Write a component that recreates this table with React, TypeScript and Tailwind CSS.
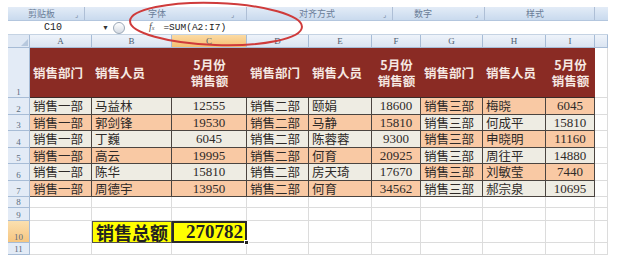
import React from "react";

const W = [
  "w-[22px]",
  "w-[62px]",
  "w-[80px]",
  "w-[75px]",
  "w-[62px]",
  "w-[63px]",
  "w-[49px]",
  "w-[62px]",
  "w-[63px]",
  "w-[49px]",
  "w-[13px]",
];

const LETTERS = ["A", "B", "C", "D", "E", "F", "G", "H", "I", ""];

const CJK = "font-['Noto_Sans_CJK_SC',sans-serif]";
const SERIF = "font-['Liberation_Serif',serif]";

const rows = [
  ["销售一部", "马益林", "12555", "销售二部", "颐娟", "18600", "销售三部", "梅晓", "6045"],
  ["销售一部", "郭剑锋", "19530", "销售二部", "马静", "15810", "销售三部", "何成平", "15810"],
  ["销售一部", "丁巍", "6045", "销售二部", "陈蓉蓉", "9300", "销售三部", "申晓明", "11160"],
  ["销售一部", "高云", "19995", "销售二部", "何育", "20925", "销售三部", "周往平", "14880"],
  ["销售一部", "陈华", "15810", "销售二部", "房天琦", "17670", "销售三部", "刘敏莹", "7440"],
  ["销售一部", "周德宇", "13950", "销售二部", "何育", "34562", "销售三部", "郝宗泉", "10695"],
];

const headers = ["销售部门", "销售人员", "5月份\n销售额", "销售部门", "销售人员", "5月份\n销售额", "销售部门", "销售人员", "5月份\n销售额"];

function RowHead({ n, hl }: { n: string; hl?: boolean }) {
  return (
    <div
      className={`${W[0]} shrink-0 h-full flex items-end justify-center border-r border-b border-[#a7bcd6] text-[9px] leading-[10px] text-[#5b6b80] ${SERIF} ${
        hl ? "bg-gradient-to-b from-[#fbe0b0] to-[#f6c680]" : "bg-[#e3ebf6]"
      }`}
    >
      {n}
    </div>
  );
}

function Empty({ i }: { i: number }) {
  return <div className={`${W[i]} shrink-0 h-full border-r border-b border-[#dcdcdc] bg-white`} />;
}

function EmptyRow({ n, h }: { n: string; h: string }) {
  return (
    <div className={`flex ${h}`}>
      <RowHead n={n} />
      {LETTERS.map((_, i) => (
        <Empty key={i} i={i + 1} />
      ))}
    </div>
  );
}

export default function App() {
  return (
    <div className="relative w-[618px] h-[265px] bg-white overflow-hidden pt-[7px] pl-[8px]">
      <div className="w-[600px] flex flex-col">
        {/* ribbon group labels */}
        <div className="h-[14px] flex bg-gradient-to-b from-[#e3ecf7] to-[#c9daee] border-b border-[#b3c6de] text-[9px] leading-[12px] text-[#6a7d98] font-['Noto_Sans_CJK_SC',sans-serif]">
          <div className="w-[77px] flex items-center border-r border-[#aebfd6]">
            <span className="ml-[20px]">剪贴板</span>
            <span className="ml-auto mr-[6px] text-[7px]">⌟</span>
          </div>
          <div className="w-[162px] flex items-center border-r border-[#aebfd6]">
            <span className="ml-[63px]">字体</span>
            <span className="ml-auto mr-[12px] text-[7px]">⌟</span>
          </div>
          <div className="w-[146px] flex items-center border-r border-[#aebfd6]">
            <span className="ml-[52px]">对齐方式</span>
            <span className="ml-auto mr-[6px] text-[7px]">⌟</span>
          </div>
          <div className="w-[92px] flex items-center border-r border-[#aebfd6]">
            <span className="ml-[21px]">数字</span>
            <span className="ml-auto mr-[6px] text-[7px]">⌟</span>
          </div>
          <div className="w-[110px] flex items-center border-r border-[#aebfd6]">
            <span className="ml-[41px]">样式</span>
          </div>
          <div className="flex-1" />
        </div>

        {/* formula bar */}
        <div className="h-[14px] flex items-center bg-white border-b border-[#c5d3e3] text-[10px] leading-[12px] text-[#222]">
          <div className="w-[92px] flex justify-center">
            <span className="font-['Liberation_Mono',monospace] ml-[-2px]">C10</span>
          </div>
          <span className="text-[7px] text-[#333] ml-[2px]">▼</span>
          <span className="ml-[4px] w-[12px] h-[12px] rounded-full border border-[#9aa7b6] bg-gradient-to-b from-[#ffffff] to-[#d5dbe3]" />
          <span className="ml-[24px] italic font-['Liberation_Serif',serif] text-[10px] text-[#555]">
            f<span className="text-[6px]">x</span>
          </span>
          <span className="ml-[9px] font-['Liberation_Mono',monospace] text-[9.5px] text-[#222]">=SUM(A2:I7)</span>
        </div>

        {/* column headers */}
        <div className="flex h-[13px]">
          <div className={`${W[0]} shrink-0 h-full border-r border-b border-[#a7bcd6] bg-[#dfe8f4] flex items-end justify-end`}>
            <svg width="7" height="7" className="mb-[1px] mr-[1px]">
              <path d="M7 0 L7 7 L0 7 Z" fill="#b7c8dd" />
            </svg>
          </div>
          {LETTERS.map((l, i) => (
            <div
              key={i}
              className={`${W[i + 1]} shrink-0 h-full flex items-center justify-center border-r border-b border-[#a7bcd6] text-[9px] leading-[11px] text-[#4d5b6e] ${SERIF} ${
                l === "C" ? "bg-gradient-to-b from-[#fbdba4] to-[#f5bf70]" : "bg-gradient-to-b from-[#eef3fa] to-[#dae4f1]"
              }`}
            >
              {l}
            </div>
          ))}
        </div>

        {/* row 1 header */}
        <div className="flex h-[50px]">
          <RowHead n="1" />
          {headers.map((t, i) => {
            const two = t.includes("\n");
            return (
              <div
                key={i}
                className={`${W[i + 1]} shrink-0 h-full bg-[#8a2b24] border-b border-[#3a2a28] flex items-center ${
                  two ? "justify-center text-center" : "pl-[3px]"
                } text-[12.5px] leading-[16px] font-bold text-[#f6e8e2] whitespace-pre-line ${CJK}`}
              >
                {t}
              </div>
            );
          })}
          <Empty i={10} />
        </div>

        {/* data rows */}
        {rows.map((r, ri) => {
          const rowNo = ri + 2;
          const evenRow = rowNo % 2 === 0;
          return (
            <div key={ri} className="flex h-[16.5px]">
              <RowHead n={String(rowNo)} />
              {r.map((v, ci) => {
                const left = ci < 6;
                const gray = left ? evenRow : !evenRow;
                const num = ci % 3 === 2;
                return (
                  <div
                    key={ci}
                    className={`${W[ci + 1]} shrink-0 h-full flex items-center border-r border-b border-[#4a4440] ${
                      gray ? "bg-[#eeece3]" : "bg-[#f9c9a4]"
                    } ${
                      num ? `justify-center text-[13px] ${SERIF}` : `pl-[3px] text-[12.5px] ${CJK}`
                    } leading-[15px] text-[#2e2a28] whitespace-nowrap`}
                  >
                    {v}
                  </div>
                );
              })}
              <Empty i={10} />
            </div>
          );
        })}

        <EmptyRow n="8" h="h-[11px]" />
        <EmptyRow n="9" h="h-[13px]" />

        {/* row 10 */}
        <div className="flex h-[22px]">
          <RowHead n="10" hl />
          <Empty i={1} />
          <div
            className={`${W[2]} shrink-0 h-full bg-[#ffff00] border border-[#55524a] flex items-center justify-center text-[18px] font-bold leading-[20px] text-[#222] ${CJK}`}
          >
            销售总额
          </div>
          <div
            className={`relative ${W[3]} shrink-0 h-full bg-[#ffff00] border-2 border-[#2a2a2a] flex items-center justify-end pr-[2px] text-[19px] font-bold leading-[18px] text-[#222] ${SERIF}`}
          >
            270782
            <span className="absolute right-[-4px] bottom-[-4px] w-[5px] h-[5px] bg-[#222] border border-white" />
          </div>
          {[4, 5, 6, 7, 8, 9, 10].map((i) => (
            <Empty key={i} i={i} />
          ))}
        </div>

        <EmptyRow n="11" h="h-[12px]" />
      </div>

      {/* red annotation ellipse */}
      <svg className="absolute left-0 top-0 pointer-events-none" width="618" height="265">
        <ellipse cx="216" cy="24" rx="86" ry="21" transform="rotate(2 216 24)" fill="none" stroke="#cf3b3b" strokeWidth="2" />
      </svg>
    </div>
  );
}
